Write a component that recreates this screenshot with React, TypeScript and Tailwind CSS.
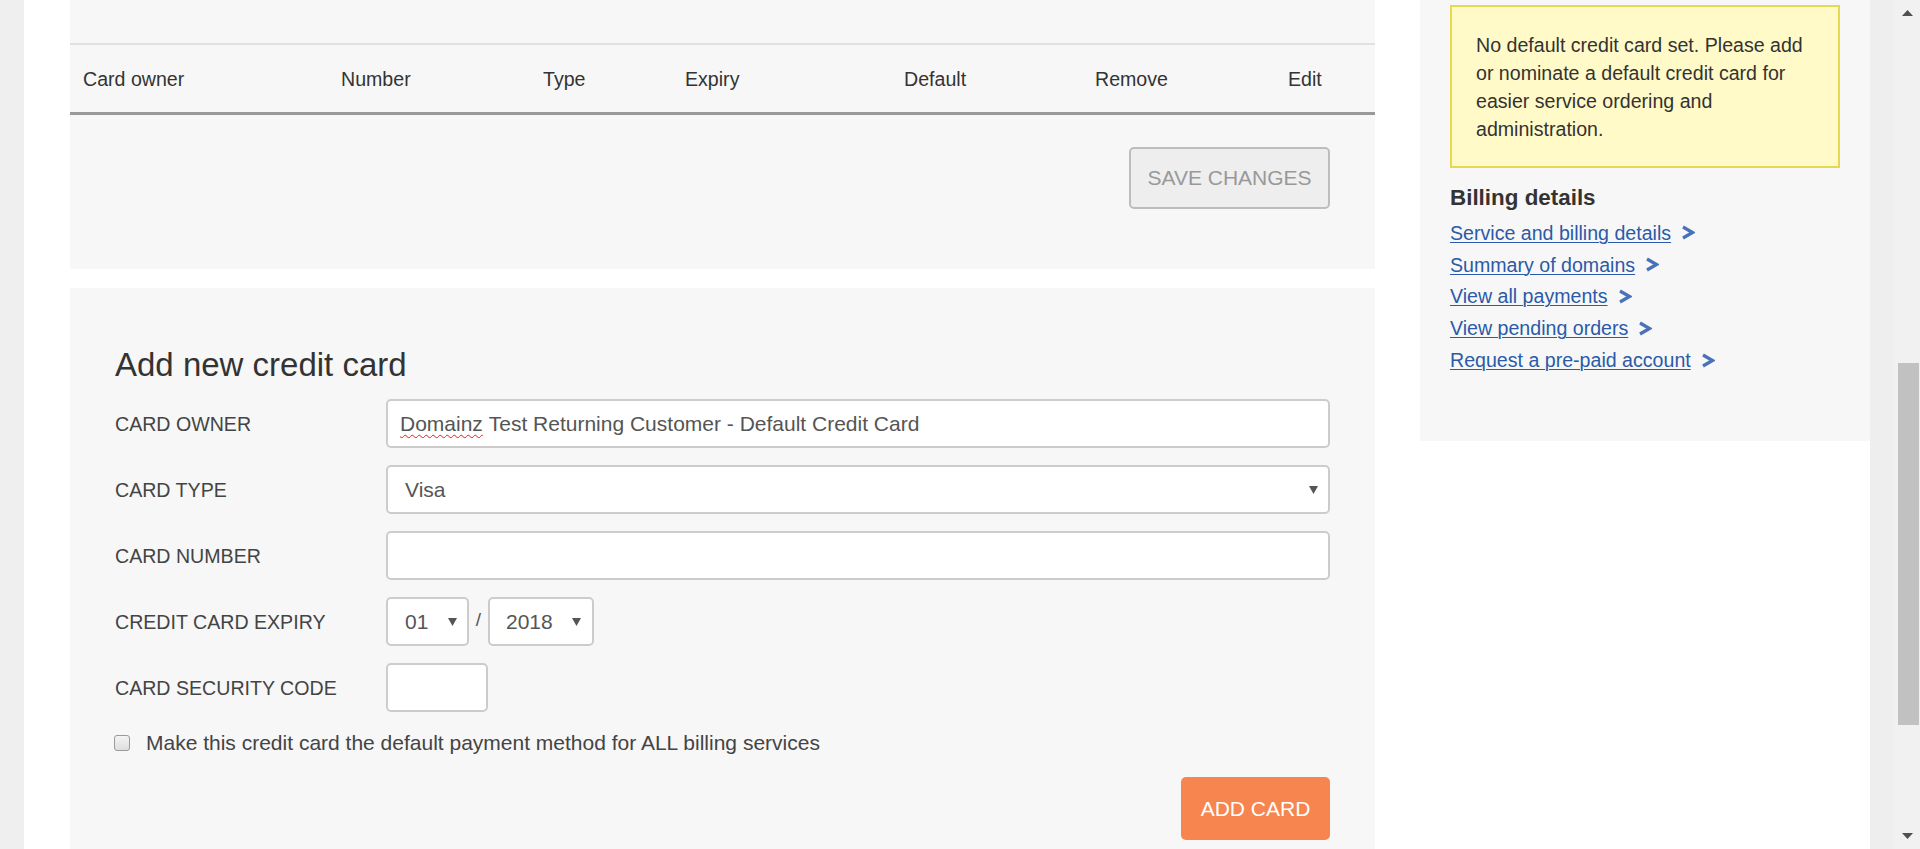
import React from "react";

const Caret = () => (
  <svg width="9" height="9" viewBox="0 0 9 9" className="shrink-0">
    <polygon points="0,1 9,1 4.5,9" fill="#555" />
  </svg>
);

const Chevron = () => (
  <svg width="14" height="15" viewBox="0 0 14 15" className="ml-[10px] shrink-0">
    <polyline points="2,2 11.5,7.5 2,13" fill="none" stroke="#4a72b8" strokeWidth="3.2" strokeLinejoin="miter" />
  </svg>
);

const Row = ({ label, children }: { label: string; children: React.ReactNode }) => (
  <div className="flex items-center">
    <div className="w-[271px] shrink-0 text-[#444]">{label}</div>
    {children}
  </div>
);

const inputBox =
  "h-[49px] bg-white border-2 border-[#cccccc] rounded-[5px] flex items-center text-[#555] text-[21px]";

export default function App() {
  const cols: [string, string][] = [
    ["Card owner", "w-[258px]"],
    ["Number", "w-[202px]"],
    ["Type", "w-[142px]"],
    ["Expiry", "w-[219px]"],
    ["Default", "w-[191px]"],
    ["Remove", "w-[193px]"],
    ["Edit", "flex-1"],
  ];
  const links = [
    "Service and billing details",
    "Summary of domains",
    "View all payments",
    "View pending orders",
    "Request a pre-paid account",
  ];
  return (
    <div className="flex h-[849px] w-[1920px] overflow-hidden bg-white font-['Liberation_Sans',Arial,sans-serif] text-[19.6px] leading-[28px] text-[#333]">
      {/* left page gutter */}
      <div className="w-[24px] shrink-0 bg-[#efefef]" />

      {/* main column */}
      <div className="ml-[46px] flex w-[1305px] shrink-0 flex-col">
        {/* saved cards panel */}
        <div className="flex h-[269px] flex-col bg-[#f7f7f7] pt-[43px]">
          <div className="flex h-[72px] items-center border-t-2 border-b-[3px] border-t-[#e1e1e1] border-b-[#999999]">
            {cols.map(([c, w]) => (
              <div key={c} className={`${w} pl-[13px]`}>
                {c}
              </div>
            ))}
          </div>
          <div className="flex justify-end pr-[45px] pt-[32px]">
            <button className="h-[62px] w-[201px] rounded-[5px] border-2 border-[#bdbdbd] bg-[#eeeeee] text-[21px] leading-[28px] text-[#999]">
              SAVE CHANGES
            </button>
          </div>
        </div>

        {/* add new card panel */}
        <div className="mt-[19px] flex flex-1 flex-col bg-[#f7f7f7] px-[45px] pt-[58px]">
          <h3 className="h-[37px] text-[33px] leading-[37px] text-[#333]">Add new credit card</h3>
          <div className="mt-[16px] flex flex-col gap-[17px]">
            <Row label="CARD OWNER">
              <div className={`${inputBox} flex-1 pl-[12px]`}>
                <span className="underline decoration-wavy decoration-[#e02020] decoration-1 underline-offset-[3px]">
                  Domainz
                </span>
                <span>&nbsp;Test Returning Customer - Default Credit Card</span>
              </div>
            </Row>
            <Row label="CARD TYPE">
              <div className={`${inputBox} flex-1 justify-between pl-[17px] pr-[10px]`}>
                <span>Visa</span>
                <Caret />
              </div>
            </Row>
            <Row label="CARD NUMBER">
              <div className={`${inputBox} flex-1`} />
            </Row>
            <Row label="CREDIT CARD EXPIRY">
              <div className="flex items-center">
                <div className={`${inputBox} w-[83px] justify-between pl-[17px] pr-[10px]`}>
                  <span>01</span>
                  <Caret />
                </div>
                <span className="mb-[4px] w-[19px] text-center text-[19px] leading-[24px] text-[#555]">/</span>
                <div className={`${inputBox} w-[106px] justify-between pl-[16px] pr-[11px]`}>
                  <span>2018</span>
                  <Caret />
                </div>
              </div>
            </Row>
            <Row label="CARD SECURITY CODE">
              <div className={`${inputBox} w-[102px]`} />
            </Row>
          </div>
          <div className="mt-[17px] flex items-center text-[21px] text-[#444]">
            <div className="ml-[-1px] h-[16px] w-[16px] rounded-[3px] border border-[#9a9a9a] bg-gradient-to-b from-[#f4f4f4] to-[#dedede]" />
            <span className="ml-[16px]">
              Make this credit card the default payment method for ALL billing services
            </span>
          </div>
          <div className="mt-[20px] flex justify-end">
            <button className="h-[63px] w-[149px] rounded-[5px] bg-[#f6854f] text-[21px] leading-[28px] text-white">
              ADD CARD
            </button>
          </div>
        </div>
      </div>

      {/* sidebar */}
      <div className="ml-[45px] flex w-[450px] shrink-0 flex-col">
        <div className="flex h-[441px] flex-col bg-[#f7f7f7] px-[30px] pt-[5px]">
          <div className="border-2 border-[#e6d94f] bg-[#fffac8] px-[24px] pt-[24px] pb-[23px] text-[#333]">
            No default credit card set. Please add or nominate a default credit card for easier service
            ordering and administration.
          </div>
          <h4 className="mt-[16px] text-[22.4px] font-bold leading-[28px] text-[#333]">Billing details</h4>
          <div className="mt-[5px] flex flex-col">
            {links.map((l) => (
              <div key={l} className="flex h-[31.8px] items-center">
                <a href="#" className="text-[#2b5aa8] underline decoration-1 underline-offset-[2px]">
                  {l}
                </a>
                <Chevron />
              </div>
            ))}
          </div>
        </div>
      </div>

      {/* right page gutter */}
      <div className="w-[24px] shrink-0 bg-[#eeeeee]" />

      {/* scrollbar */}
      <div className="flex w-[26px] shrink-0 flex-col items-center bg-[#f1f1f1]">
        <svg width="11" height="7" viewBox="0 0 11 7" className="ml-[1px] mt-[10px]">
          <polygon points="5.5,0 11,6 0,6" fill="#505050" />
        </svg>
        <div className="ml-[3px] mt-[346px] h-[362px] w-[21px] bg-[#c1c1c1]" />
        <svg width="11" height="7" viewBox="0 0 11 7" className="ml-[1px] mt-[108px]">
          <polygon points="0,0 11,0 5.5,6" fill="#505050" />
        </svg>
      </div>
    </div>
  );
}
